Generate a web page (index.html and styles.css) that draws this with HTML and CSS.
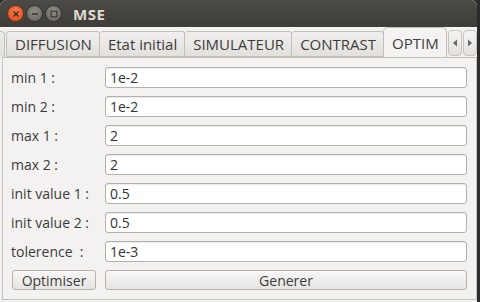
FILE: index.html
```html
<!DOCTYPE html>
<html>
<head>
<meta charset="utf-8">
<link rel="stylesheet" href="styles.css">
</head>
<body>
<div class="desk">
  <div class="window">
    <div class="titlebar">
      <div class="wbtns">
        <span class="wb close"><svg width="8" height="8" viewBox="0 0 8 8"><path d="M1.5 1.5L6.5 6.5M6.5 1.5L1.5 6.5" stroke="#3b2a22" stroke-width="1.3"/></svg></span>
        <span class="wb"><svg width="8" height="8" viewBox="0 0 8 8"><path d="M1 4H7" stroke="#3a3935" stroke-width="1.5"/></svg></span>
        <span class="wb"><svg width="8" height="8" viewBox="0 0 8 8"><rect x="1.2" y="1.2" width="5.6" height="5.6" fill="none" stroke="#3a3935" stroke-width="1.2"/></svg></span>
      </div>
      <div class="title">MSE</div>
    </div>
    <div class="tabbar">
      <div class="stub"></div>
      <div class="tab">DIFFUSION</div>
      <div class="tab">Etat initial</div>
      <div class="tab">SIMULATEUR</div>
      <div class="tab">CONTRAST</div>
      <div class="tab active">OPTIM</div>
      <div class="scroll"><svg width="6" height="8" viewBox="0 0 6 8"><path d="M5 0.5L1 4L5 7.5Z" fill="#6b6964"/></svg></div>
      <div class="scroll"><svg width="6" height="8" viewBox="0 0 6 8"><path d="M1 0.5L5 4L1 7.5Z" fill="#6b6964"/></svg></div>
    </div>
    <div class="pane">
      <div class="form">
        <label>min 1 :</label><div class="input">1e-2</div>
        <label>min 2 :</label><div class="input">1e-2</div>
        <label>max 1 :</label><div class="input">2</div>
        <label>max 2 :</label><div class="input">2</div>
        <label>init value 1 :</label><div class="input">0.5</div>
        <label>init value 2 :</label><div class="input">0.5</div>
        <label>tolerence&nbsp; :</label><div class="input">1e-3</div>
        <div class="btncell"><button class="btn">Optimiser</button></div><button class="btn wide">Generer</button>
      </div>
    </div>
  </div>
</div>
</body>
</html>
```
FILE: styles.css
```css
html, body { margin: 0; padding: 0; }
body { width: 480px; height: 302px; overflow: hidden; background: #2c2a2b; font-family: "Open Sans", "DejaVu Sans", sans-serif; font-size: 14px; color: #3c3c3c; }
.desk { display: flex; height: 302px; }
.window { width: 477px; height: 302px; background: #f2f1f0; border-radius: 6px 6px 0 0; overflow: hidden; display: flex; flex-direction: column; }
.titlebar { height: 27px; flex: none; background: linear-gradient(#4d4b46, #3d3c38); display: flex; align-items: center; }
.wbtns { display: flex; gap: 2px; padding-left: 7px; }
.wb { width: 15px; height: 15px; border-radius: 50%; background: radial-gradient(circle at 50% 35%, #8f8c84, #65625c); border: 1px solid #34332f; display: flex; align-items: center; justify-content: center; }
.wb.close { background: radial-gradient(circle at 50% 35%, #f47a4d, #df4a1a); border-color: #6a3019; }
.title { color: #dfdbd2; font-weight: bold; font-size: 15px; margin-left: 11px; font-family: "Open Sans", sans-serif; letter-spacing: 0.5px; }
.tabbar { height: 30px; flex: none; display: flex; align-items: flex-end; background: #f2f1f0; border-top: 1px solid #f8f7f6; box-sizing: border-box; font-size: 15px; }
.stub { width: 5px; height: 26px; border: 1px solid #c2beb8; border-left: none; border-bottom: none; border-radius: 0 4px 0 0; background: linear-gradient(#efeeec, #e1dfdc); box-sizing: border-box; }
.tab { height: 26px; box-sizing: border-box; padding: 0 7px 0 8px; border: 1px solid #c2beb8; border-left: none; border-radius: 3px 3px 0 0; background: linear-gradient(#f1f0ee, #e2e0dd); display: flex; align-items: center; white-space: nowrap; }
.tab:nth-child(2) { border-left: 1px solid #c2beb8; margin-left: 1px; }
.tab.active { height: 30px; background: #f4f3f2; border: 1px solid #c2beb8; border-bottom: none; border-radius: 5px 5px 0 0; padding: 0 7px 0 8px; margin-left: -1px; }
.scroll { width: 14px; height: 26px; box-sizing: border-box; border: 1px solid #c6c2bc; border-radius: 4px; background: linear-gradient(#f6f5f4, #e3e1de); display: flex; align-items: center; justify-content: center; margin-left: 1px; margin-bottom: 1px; }
.pane { flex: 1; margin-left: 2px; border: 1px solid #c6c2bc; border-top-color: #c2beb8; box-sizing: border-box; margin-bottom: 2px; background: #f3f2f1; padding: 9px 9px 0 8px; }
.form { display: grid; grid-template-columns: 94px 1fr; row-gap: 8px; align-items: center; }
.form label { white-space: nowrap; }
.input { height: 21px; box-sizing: border-box; border: 1px solid #b4b0aa; border-radius: 3px; background: #fff; box-shadow: inset 0 1px 1px rgba(0,0,0,0.08); padding-left: 4px; display: flex; align-items: center; color: #333; }
.btncell { display: flex; }
.btn { height: 20px; box-sizing: border-box; border: 1px solid #b6b2ab; border-radius: 3px; background: linear-gradient(#f8f7f6, #e6e4e1); font: inherit; color: #3c3c3c; padding: 0 6px; display: flex; align-items: center; justify-content: center; margin: 0; }
.btncell .btn { margin-left: 1px; width: 84px; }
.btn.wide { width: 100%; }
```
